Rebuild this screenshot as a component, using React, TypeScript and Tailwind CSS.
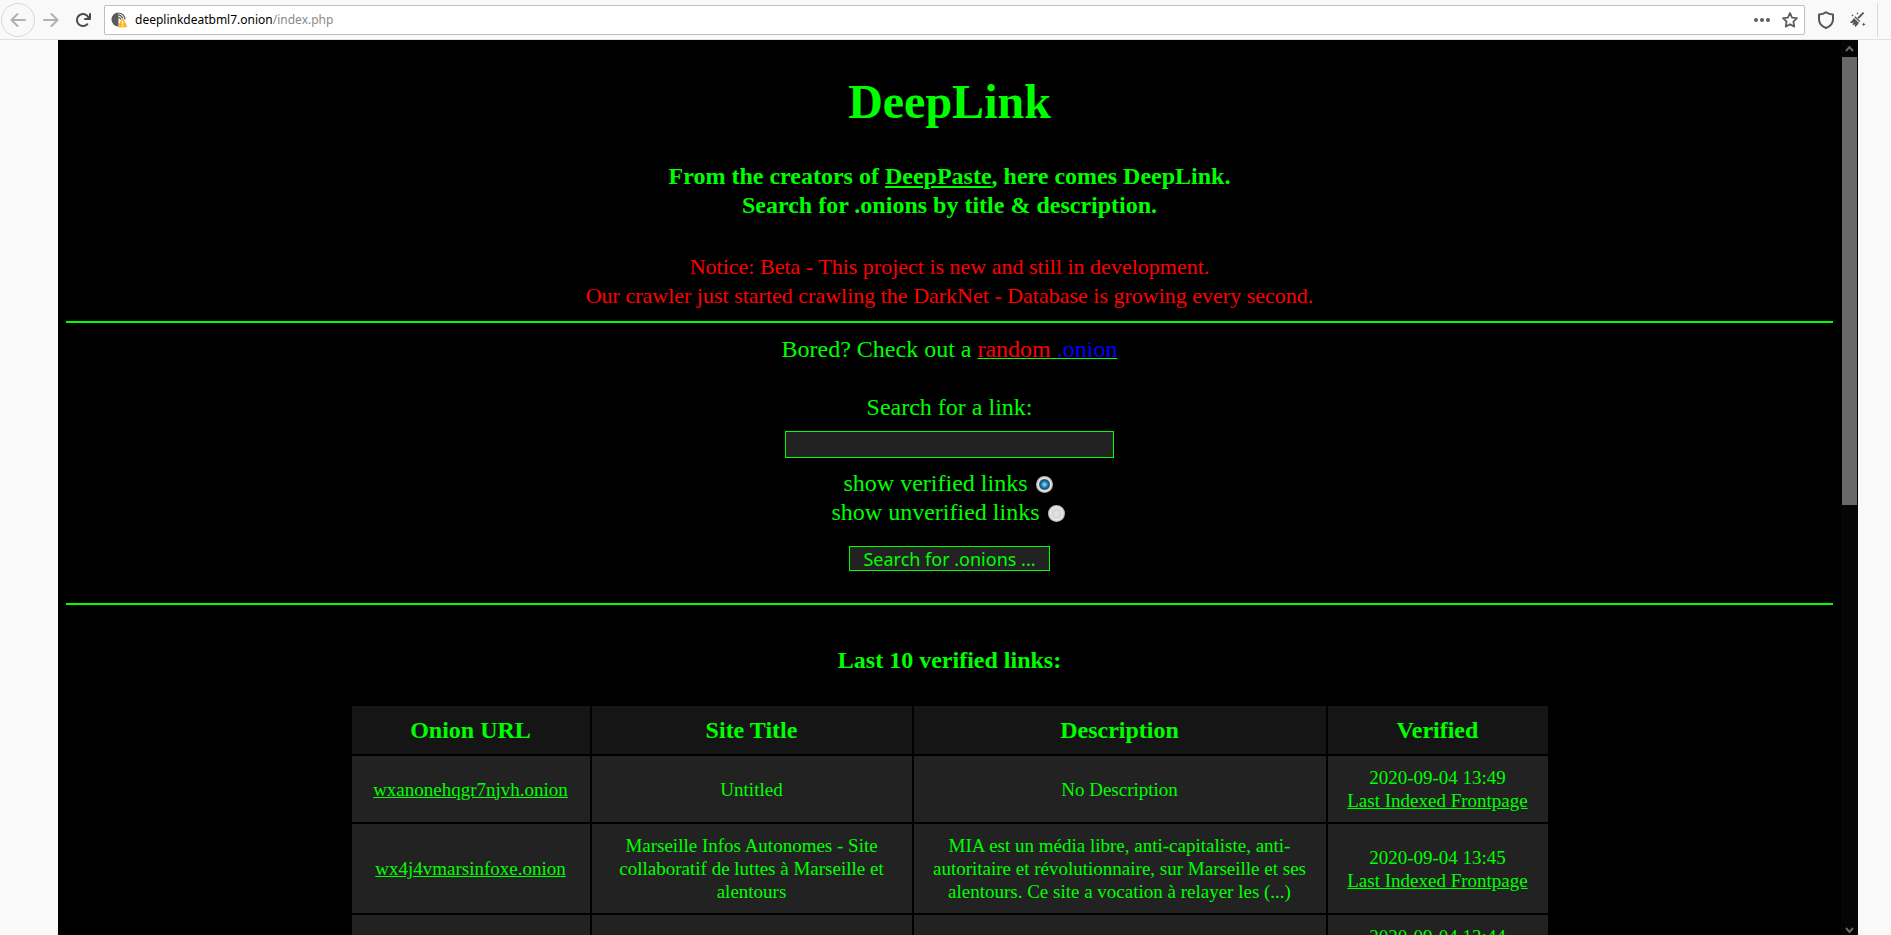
import React from 'react';

interface LinkRow {
  url: string;
  title: string;
  description: string;
  verified: string;
}

const ROWS: LinkRow[] = [
  {
    url: 'wxanonehqgr7njvh.onion',
    title: 'Untitled',
    description: 'No Description',
    verified: '2020-09-04 13:49',
  },
  {
    url: 'wx4j4vmarsinfoxe.onion',
    title: 'Marseille Infos Autonomes - Site collaboratif de luttes à Marseille et alentours',
    description:
      'MIA est un média libre, anti-capitaliste, anti-autoritaire et révolutionnaire, sur Marseille et ses alentours. Ce site a vocation à relayer les (...)',
    verified: '2020-09-04 13:45',
  },
  { url: '', title: '', description: '', verified: '2020-09-04 13:44' },
];

const BackIcon = () => (
  <svg width="16" height="16" viewBox="0 0 16 16" fill="none" stroke="#b1b1b1" strokeWidth="2" strokeLinecap="round" strokeLinejoin="round">
    <path d="M15 8H1.5M7.5 2L1.5 8l6 6" />
  </svg>
);

const ForwardIcon = () => (
  <svg width="16" height="16" viewBox="0 0 16 16" fill="none" stroke="#b1b1b1" strokeWidth="2" strokeLinecap="round" strokeLinejoin="round">
    <path d="M1 8h13.5M8.5 2l6 6-6 6" />
  </svg>
);

const ReloadIcon = () => (
  <svg width="16" height="16" viewBox="0 0 16 16" fill="#4a4a4a">
    <path d="M15 1a1 1 0 0 0-1 1v2.418A6.995 6.995 0 1 0 8 15a6.954 6.954 0 0 0 4.95-2.05 1 1 0 0 0-1.414-1.414A5.019 5.019 0 1 1 12.549 6H10a1 1 0 0 0 0 2h5a1 1 0 0 0 1-1V2a1 1 0 0 0-1-1z" />
  </svg>
);

const OnionIcon = () => (
  <svg width="17" height="16" viewBox="0 0 17 16" fill="none">
    <path d="M7.5.5a7 7 0 0 0 0 14z" fill="#5a5a5a" />
    <path d="M7.5 1A6.5 6.5 0 0 1 14 7.5M7.5 3.2a4.3 4.3 0 0 1 4.3 4.3M7.5 5.4a2.1 2.1 0 0 1 2.1 2.1" stroke="#5a5a5a" strokeWidth="1.2" />
    <path d="M11.5 6.2l4.3 8.6H7.2z" fill="#ffb21a" stroke="#ffb21a" strokeLinejoin="round" />
    <path d="M11.5 8.8v3M11.5 12.8V14" stroke="#fff" strokeWidth="1.4" />
  </svg>
);

const StarIcon = () => (
  <svg width="16" height="16" viewBox="0 0 16 16" fill="none" stroke="#5e5e5e" strokeWidth="1.8" strokeLinejoin="round">
    <path d="M8 1l2.1 4.6 4.9.6-3.6 3.4.9 5L8 12.2l-4.3 2.4.9-5L1 6.2l4.9-.6z" />
  </svg>
);

const ShieldIcon = () => (
  <svg width="18" height="18" viewBox="0 0 18 18" fill="none" stroke="#555" strokeWidth="2" strokeLinejoin="round">
    <path d="M9 1.2c2 1.5 4.3 2.2 7 2.2v4.8c0 4-2.3 7-7 8.8-4.7-1.8-7-4.8-7-8.8V3.4c2.7 0 5-.7 7-2.2z" />
  </svg>
);

const BroomIcon = () => (
  <svg width="17" height="17" viewBox="0 0 17 17" fill="#555">
    <path d="M13.9 1l1.3 1.2-5.3 5.6-1.5-1.4z" />
    <path d="M6.3 5.3l5 4.7-.9 1.1-5.1-4.8z" />
    <path d="M4.8 7l5 4.7c-.7 1.6-1.8 3-3.4 4.2l-1-.9 1-2-1.9 1.2-1-.9 1.2-2-2.2 1-1.6-1.4C2.5 10.5 3.9 9 4.8 7z" />
    <path d="M8.5 1l.4 1 1 .4-1 .4-.4 1-.4-1-1-.4 1-.4zM3.5 3l.4 1 1 .4-1 .4-.4 1-.4-1-1-.4 1-.4zM14.7 11.5l.6 1.3 1.3.6-1.3.6-.6 1.3-.6-1.3-1.3-.6 1.3-.6z" />
  </svg>
);

const Toolbar = () => (
  <header className="flex h-10 shrink-0 items-center border-b border-[#e0e0e1] bg-[#f9f9fa] font-['Noto_Sans',sans-serif]">
    <button aria-label="Back" className="ml-px flex size-[34px] items-center justify-center rounded-full border border-[#d8d8d8]">
      <BackIcon />
    </button>
    <button aria-label="Forward" className="ml-2 flex size-4 items-center justify-center">
      <ForwardIcon />
    </button>
    <button aria-label="Reload" className="ml-4 flex size-4 items-center justify-center">
      <ReloadIcon />
    </button>
    <div className="ml-[13px] flex h-[30px] flex-1 items-center rounded-xs border border-[#bebebe] bg-white">
      <span className="ml-[6px]">
        <OnionIcon />
      </span>
      <p className="ml-[7px] flex-1 text-xs text-[#8a8a8a]">
        <span className="text-black">deeplinkdeatbml7.onion</span>/index.php
      </p>
      <button aria-label="Page actions" className="mr-3 flex items-center gap-[2px]">
        <span className="size-1 rounded-full bg-[#5e5e5e]" />
        <span className="size-1 rounded-full bg-[#5e5e5e]" />
        <span className="size-1 rounded-full bg-[#5e5e5e]" />
      </button>
      <button aria-label="Bookmark this page" className="mr-[6px]">
        <StarIcon />
      </button>
    </div>
    <button aria-label="Security level" className="ml-3">
      <ShieldIcon />
    </button>
    <button aria-label="New identity" className="ml-[14px]">
      <BroomIcon />
    </button>
    <span className="mr-[13px] ml-[11px] h-[34px] w-px bg-[#d7d7db]" />
  </header>
);

const Rule = () => <hr className="border-t-2 border-[#0f0]" />;

const Radio = ({ id, defaultChecked = false }: { id: string; defaultChecked?: boolean }) => (
  <input
    type="radio"
    name="verified"
    id={id}
    defaultChecked={defaultChecked}
    className="mt-px mr-[2px] ml-[9px] size-[17px] appearance-none rounded-full bg-[radial-gradient(circle,#e8e8ea_0,#d2d2d6_40%,#f0f0f0_50%,#a8a8a8_72%)] checked:bg-[radial-gradient(circle,#9fe3fb_0,#2a8fc6_22%,#1c4560_40%,#ececec_50%,#a8a8a8_72%)]"
  />
);

const SearchForm = () => (
  <form className="flex flex-col items-center" onSubmit={(e) => e.preventDefault()}>
    <label htmlFor="q" className="mt-[29px]">
      Search for a link:
    </label>
    <input id="q" type="text" className="mt-[9px] h-[27px] w-[329px] border border-[#0f0] bg-[#222] px-1 text-base" />
    <div className="mt-[11px] flex items-center">
      <label htmlFor="verified">show verified links</label>
      <Radio id="verified" defaultChecked />
    </div>
    <div className="flex items-center">
      <label htmlFor="unverified">show unverified links</label>
      <Radio id="unverified" />
    </div>
    <button className="mt-[19px] mb-8 flex h-[25px] w-[201px] items-center justify-center border border-[#0f0] bg-[#222] font-['Noto_Sans',sans-serif] text-lg">
      Search for .onions ...
    </button>
  </form>
);

const LinksTable = () => (
  <table className="mx-auto w-[1200px] table-fixed border-separate border-spacing-[2px] text-center">
    <thead>
      <tr className="bg-[#151515]">
        <th className="w-[238px] p-[10px] leading-7">Onion URL</th>
        <th className="w-[320px] p-[10px] leading-7">Site Title</th>
        <th className="p-[10px] leading-7">Description</th>
        <th className="w-[220px] p-[10px] leading-7">Verified</th>
      </tr>
    </thead>
    <tbody className="text-[19px] leading-[23px]">
      {ROWS.map(({ url, title, description, verified }) => (
        <tr key={verified} className="bg-[#222]">
          <td className="p-[10px]">
            <a href="#" className="underline">
              {url}
            </a>
          </td>
          <td className="p-[10px]">{title}</td>
          <td className="p-[10px]">{description}</td>
          <td className="p-[10px]">
            {verified}
            <br />
            <a href="#" className="underline">
              Last Indexed Frontpage
            </a>
          </td>
        </tr>
      ))}
    </tbody>
  </table>
);

const Scrollbar = () => (
  <div className="flex w-[17px] shrink-0 flex-col items-center bg-[#050506]">
    <svg width="17" height="17" viewBox="0 0 17 17" fill="none" stroke="#686868" strokeWidth="2">
      <path d="M5 11l3.5-4 3.5 4" />
    </svg>
    <div className="h-1/2 w-[15px] bg-[#686868]" />
    <svg className="mt-auto" width="17" height="11" viewBox="0 0 17 11" fill="none" stroke="#686868" strokeWidth="2">
      <path d="M5 4l3.5 4L12 4" />
    </svg>
  </div>
);

const App = () => (
  <div className="flex h-screen flex-col overflow-hidden bg-[#f9f9fa]">
    <Toolbar />
    <div className="mr-[33px] ml-[58px] flex min-h-0 flex-1">
      <main className="flex-1 overflow-hidden bg-black px-2 text-center font-['Liberation_Serif',serif] text-2xl leading-[29px] text-[#0f0]">
        <h1 className="mt-[34px] text-5xl leading-[55px] font-bold">DeepLink</h1>
        <h3 className="mt-[33px] font-bold">
          From the creators of{' '}
          <a href="#" className="underline">
            DeepPaste
          </a>
          , here comes DeepLink.
          <br />
          Search for .onions by title &amp; description.
        </h3>
        <p className="mt-8 mb-[11px] text-[22px] text-[#f00]">
          Notice: Beta - This project is new and still in development.
          <br />
          Our crawler just started crawling the DarkNet - Database is growing every second.
        </p>
        <Rule />
        <p className="mt-3">
          Bored? Check out a{' '}
          <a href="#" className="underline decoration-[#0f0] decoration-1">
            <span className="text-[#f00]">random</span> <span className="text-[#00f]">.onion</span>
          </a>
        </p>
        <SearchForm />
        <Rule />
        <h3 className="mt-[41px] mb-[29px] font-bold">Last 10 verified links:</h3>
        <LinksTable />
      </main>
      <Scrollbar />
    </div>
  </div>
);

export default App;
